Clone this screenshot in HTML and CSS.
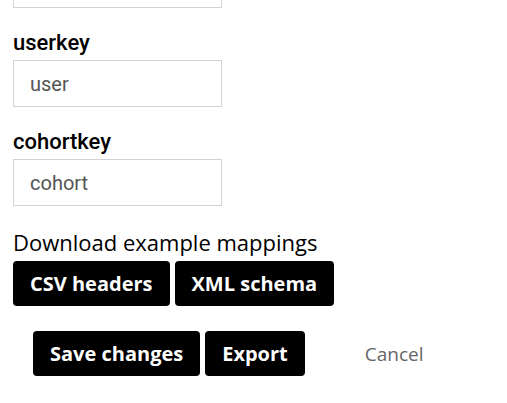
FILE: index.html
```html
<!DOCTYPE html>
<html lang="en">
<head>
    <meta charset="UTF-8">
    <meta name="viewport" content="width=device-width, initial-scale=1.0">
    <title>Import settings</title>
    <link rel="stylesheet" href="styles.css">
</head>
<body>
    <form class="settings" onsubmit="return false">
        <div class="form-group first">
            <label for="course-key">coursekey</label>
            <input type="text" id="course-key" value="course">
        </div>
        <div class="form-group">
            <label for="user-key">userkey</label>
            <input type="text" id="user-key" value="user">
        </div>
        <div class="form-group">
            <label for="cohort-key">cohortkey</label>
            <input type="text" id="cohort-key" value="cohort">
        </div>

        <div class="downloads">
            <p class="downloads-title">Download example mappings</p>
            <div class="btn-row">
                <button type="button" class="btn">CSV headers</button>
                <button type="button" class="btn">XML schema</button>
            </div>
        </div>

        <div class="actions">
            <button type="submit" class="btn">Save changes</button>
            <button type="button" class="btn">Export</button>
            <a href="#" class="cancel">Cancel</a>
        </div>
    </form>
</body>
</html>
```

FILE: styles.css
```css
body {
    margin: 0;
    background-color: #fff;
    color: #000;
    font-family: Roboto, Arial, sans-serif;
}
.settings {
    padding: 0 13px;
}
.form-group {
    margin-bottom: 21px;
}
/* page is scrolled, only the bottom of the first field shows */
.form-group.first {
    margin-top: -70px;
}
label {
    display: block;
    font-size: 22px;
    font-weight: 500;
    line-height: 28px;
    margin-bottom: 3px;
}
input {
    display: block;
    box-sizing: border-box;
    width: 209px;
    height: 47px;
    padding: 0 16px;
    border: 1px solid #d2d2d8;
    border-radius: 0;
    font-family: Roboto, Arial, sans-serif;
    font-size: 20px;
    color: #555;
}
.downloads-title {
    margin: 0 0 4px;
    font-family: "Open Sans", Arial, sans-serif;
    font-size: 22px;
    line-height: 30px;
}
.btn-row {
    display: flex;
    gap: 5px;
}
.btn {
    height: 45px;
    padding: 0 17px;
    border: none;
    border-radius: 4px;
    background-color: #000;
    color: #fff;
    font-family: "Open Sans", Arial, sans-serif;
    font-size: 20px;
    font-weight: 700;
    cursor: pointer;
}
.actions {
    display: flex;
    align-items: center;
    gap: 5px;
    margin-top: 25px;
    padding-left: 20px;
}
.cancel {
    margin-left: 55px;
    font-family: "Open Sans", Arial, sans-serif;
    font-size: 19px;
    color: #666;
    text-decoration: none;
}
```
